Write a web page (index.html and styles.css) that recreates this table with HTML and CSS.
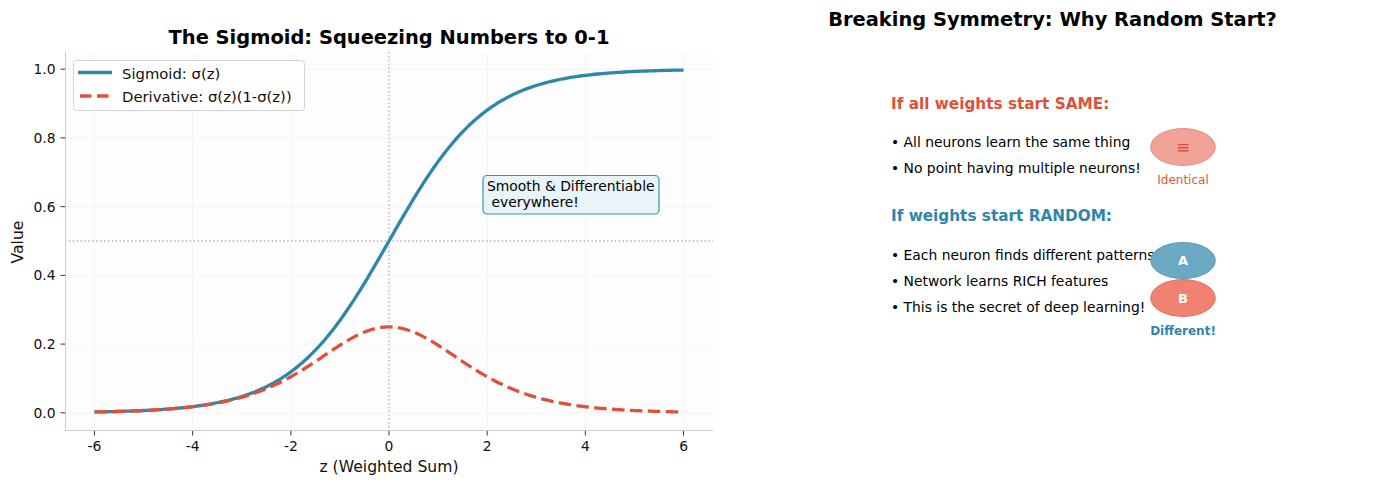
FILE: index.html
```html
<!DOCTYPE html>
<html lang="en">
<head>
<meta charset="utf-8">
<title>Sigmoid and Symmetry Breaking</title>
<link rel="stylesheet" href="styles.css">
</head>
<body>
<div class="page">
  <section class="chart-panel">
    <h1 class="chart-title">The Sigmoid: Squeezing Numbers to 0-1</h1>
    <svg class="chart" width="730" height="438" viewBox="0 49 730 438" xmlns="http://www.w3.org/2000/svg">
      <rect class="axes-bg" x="65" y="52" width="648" height="378"/>
      <g class="grid">
        <line x1="94.45" y1="52" x2="94.45" y2="430"/>
        <line x1="192.64" y1="52" x2="192.64" y2="430"/>
        <line x1="290.82" y1="52" x2="290.82" y2="430"/>
        <line x1="389" y1="52" x2="389" y2="430"/>
        <line x1="487.18" y1="52" x2="487.18" y2="430"/>
        <line x1="585.36" y1="52" x2="585.36" y2="430"/>
        <line x1="683.55" y1="52" x2="683.55" y2="430"/>
        <line x1="65" y1="412.82" x2="713" y2="412.82"/>
        <line x1="65" y1="344.09" x2="713" y2="344.09"/>
        <line x1="65" y1="275.36" x2="713" y2="275.36"/>
        <line x1="65" y1="206.64" x2="713" y2="206.64"/>
        <line x1="65" y1="137.91" x2="713" y2="137.91"/>
        <line x1="65" y1="69.18" x2="713" y2="69.18"/>
      </g>
      <line class="ref-line" x1="65" y1="241" x2="713" y2="241"/>
      <line class="ref-line" x1="389" y1="52" x2="389" y2="430"/>
      <path id="sig" class="curve-sig" d=""/>
      <path id="der" class="curve-der" d=""/>
      <line class="spine" x1="65.5" y1="52" x2="65.5" y2="431"/>
      <line class="spine" x1="65" y1="430.5" x2="713" y2="430.5"/>
      <g class="ticks">
        <line x1="94.45" y1="431" x2="94.45" y2="435.5"/>
        <line x1="192.64" y1="431" x2="192.64" y2="435.5"/>
        <line x1="290.82" y1="431" x2="290.82" y2="435.5"/>
        <line x1="389" y1="431" x2="389" y2="435.5"/>
        <line x1="487.18" y1="431" x2="487.18" y2="435.5"/>
        <line x1="585.36" y1="431" x2="585.36" y2="435.5"/>
        <line x1="683.55" y1="431" x2="683.55" y2="435.5"/>
        <line x1="60.5" y1="412.82" x2="65" y2="412.82"/>
        <line x1="60.5" y1="344.09" x2="65" y2="344.09"/>
        <line x1="60.5" y1="275.36" x2="65" y2="275.36"/>
        <line x1="60.5" y1="206.64" x2="65" y2="206.64"/>
        <line x1="60.5" y1="137.91" x2="65" y2="137.91"/>
        <line x1="60.5" y1="69.18" x2="65" y2="69.18"/>
      </g>
      <g class="tick-label tick-x">
        <text x="94.45" y="451">-6</text>
        <text x="192.64" y="451">-4</text>
        <text x="290.82" y="451">-2</text>
        <text x="389" y="451">0</text>
        <text x="487.18" y="451">2</text>
        <text x="585.36" y="451">4</text>
        <text x="683.55" y="451">6</text>
      </g>
      <g class="tick-label tick-y">
        <text x="55.5" y="417.9">0.0</text>
        <text x="55.5" y="349.1">0.2</text>
        <text x="55.5" y="280.4">0.4</text>
        <text x="55.5" y="211.7">0.6</text>
        <text x="55.5" y="142.9">0.8</text>
        <text x="55.5" y="74.2">1.0</text>
      </g>
      <text class="axis-label" x="389" y="472">z (Weighted Sum)</text>
      <text class="axis-label" transform="translate(23 242) rotate(-90)">Value</text>
      <g class="legend">
        <rect class="legend-box" x="73.5" y="60.5" width="231" height="50" rx="3"/>
        <line class="curve-sig" x1="78" y1="72.5" x2="112" y2="72.5"/>
        <line class="curve-der legend-dash" x1="78" y1="96" x2="112" y2="96"/>
        <text x="122" y="78.5">Sigmoid: σ(z)</text>
        <text x="122" y="102">Derivative: σ(z)(1-σ(z))</text>
      </g>
      <g class="note">
        <rect class="note-box" x="483" y="175.5" width="176" height="38.5" rx="4"/>
        <text x="487" y="190.5">Smooth &amp; Differentiable</text>
        <text x="491.5" y="206.5">everywhere!</text>
      </g>
    </svg>
  </section>

  <section class="sym-panel">
    <h2 class="sym-title">Breaking Symmetry: Why Random Start?</h2>
    <div class="sym-body">
      <div class="case case-same">
        <h3>If all weights start SAME:</h3>
        <div class="case-body">
          <ul>
            <li>• All neurons learn the same thing</li>
            <li>• No point having multiple neurons!</li>
          </ul>
          <div class="fig fig-same">
            <svg class="blob" width="66" height="38" viewBox="0 0 66 38" xmlns="http://www.w3.org/2000/svg">
              <ellipse class="blob-same" cx="33" cy="19" rx="32.3" ry="18.4"/>
              <text class="blob-sym" x="33" y="25">≡</text>
            </svg>
            <div class="fig-label label-same">Identical</div>
          </div>
        </div>
      </div>
      <div class="case case-random">
        <h3>If weights start RANDOM:</h3>
        <div class="case-body">
          <ul>
            <li>• Each neuron finds different patterns</li>
            <li>• Network learns RICH features</li>
            <li>• This is the secret of deep learning!</li>
          </ul>
          <div class="fig fig-random">
            <svg class="blob" width="66" height="37" viewBox="0 0 66 37" xmlns="http://www.w3.org/2000/svg">
              <ellipse class="blob-a" cx="33" cy="18.5" rx="32.3" ry="18"/>
              <text class="blob-letter" x="33" y="23.3">A</text>
            </svg>
            <svg class="blob" width="66" height="38" viewBox="0 0 66 38" xmlns="http://www.w3.org/2000/svg">
              <ellipse class="blob-b" cx="33" cy="19" rx="32.3" ry="18.4"/>
              <text class="blob-letter" x="33" y="23.8">B</text>
            </svg>
            <div class="fig-label label-random">Different!</div>
          </div>
        </div>
      </div>
    </div>
  </section>
</div>
<script src="script.js"></script>
</body>
</html>
```

FILE: styles.css
```css
html, body {
  margin: 0;
  padding: 0;
  background: #ffffff;
}

body {
  font-family: "DejaVu Sans", "Liberation Sans", sans-serif;
  color: #000;
}

.page {
  display: flex;
  width: 1387px;
  height: 487px;
  overflow: hidden;
}

/* ---------- left: chart ---------- */
.chart-panel {
  width: 730px;
  flex-shrink: 0;
  display: flex;
  flex-direction: column;
}

.chart-title {
  margin: 0 0 0 65px;
  width: 648px;
  padding-top: 26px;
  font-size: 19.44px;
  line-height: 23px;
  font-weight: bold;
  text-align: center;
}

.chart {
  display: block;
  font-family: "DejaVu Sans", sans-serif;
}

.axes-bg { fill: #fdfdfd; }

.grid line {
  stroke: #f1f1f1;
  stroke-width: 0.8;
}

.ref-line {
  stroke: #ababab;
  stroke-width: 1.3;
  stroke-dasharray: 1.3 2.6;
}

.curve-sig {
  fill: none;
  stroke: #2e86ab;
  stroke-width: 3.3;
  stroke-linejoin: round;
}

.curve-der {
  fill: none;
  stroke: #e0503a;
  stroke-width: 3.3;
  stroke-linejoin: round;
  stroke-dasharray: 12.5 5.4;
}

.legend-dash { stroke-dasharray: 11.5 5.5; stroke-dashoffset: -2; }

.spine {
  stroke: #cccccc;
  stroke-width: 1;
}

.ticks line {
  stroke: #333;
  stroke-width: 1;
}

.tick-label text {
  font-size: 13.89px;
  fill: #111;
}

.tick-x text { text-anchor: middle; }
.tick-y text { text-anchor: end; }

.axis-label {
  font-size: 15.6px;
  text-anchor: middle;
  fill: #111;
}

.legend-box {
  fill: #ffffff;
  fill-opacity: 0.85;
  stroke: #d4d4d4;
  stroke-width: 1;
}

.legend text {
  font-size: 14.8px;
  fill: #111;
}

.note-box {
  fill: #e8f4f8;
  stroke: #3f8fb0;
  stroke-width: 1.2;
}

.note text {
  font-size: 13.89px;
  fill: #000;
}

/* ---------- right: symmetry panel ---------- */
.sym-panel {
  width: 645px;
  flex-shrink: 0;
}

.sym-title {
  margin: 0;
  padding-top: 8px;
  font-size: 19.44px;
  line-height: 23px;
  font-weight: bold;
  text-align: center;
}

.sym-body {
  margin: 64px 0 0 161px;
}

.case h3 {
  margin: 0;
  font-size: 15.28px;
  line-height: 18px;
  font-weight: bold;
}

.case-same h3 { color: #dc5238; }
.case-random h3 { color: #2e86ab; }

.case-random { margin-top: 20px; }

.case-body {
  display: flex;
  align-items: flex-start;
}

.case-same .case-body { margin-top: 16px; }
.case-random .case-body { margin-top: 17px; }

.case ul {
  list-style: none;
  margin: 0;
  padding: 0;
  width: 259px;
  flex-shrink: 0;
  font-size: 13.89px;
  line-height: 26px;
  white-space: nowrap;
}

.fig {
  width: 66px;
  display: flex;
  flex-direction: column;
  align-items: center;
}

.fig-same { margin-top: -1px; }

.blob { display: block; }

.blob-same {
  fill: #f2a398;
  stroke: #e8897b;
  stroke-width: 1;
}

.blob-a {
  fill: #6aa8c3;
  stroke: #5c9bb6;
  stroke-width: 1;
}

.blob-b {
  fill: #ef8270;
  stroke: #e06c58;
  stroke-width: 1;
}

.blob-sym {
  font-size: 17px;
  fill: #d9503a;
  text-anchor: middle;
}

.blob-letter {
  font-size: 13px;
  font-weight: bold;
  fill: #ffffff;
  text-anchor: middle;
}

.fig-label {
  margin-top: 7px;
  font-size: 12px;
  line-height: 14px;
  white-space: nowrap;
}

.label-same { color: #dd5a44; }
.label-random { color: #2e86ab; font-weight: bold; }
```

FILE: script.js
```js
(function () {
  var SX = 648 / 13.2;
  var SY = 378 / 1.1;
  var X0 = 389;
  var Y0 = 430 - 0.05 * SY;
  function px(z) { return X0 + z * SX; }
  function py(v) { return Y0 - v * SY; }
  function sig(z) { return 1 / (1 + Math.exp(-z)); }
  function build(f) {
    var d = '';
    for (var i = 0; i <= 240; i++) {
      var z = -6 + i * 0.05;
      d += (i ? 'L' : 'M') + px(z).toFixed(2) + ' ' + py(f(z)).toFixed(2);
    }
    return d;
  }
  document.getElementById('sig').setAttribute('d', build(sig));
  document.getElementById('der').setAttribute('d', build(function (z) {
    var s = sig(z);
    return s * (1 - s);
  }));
})();
```
